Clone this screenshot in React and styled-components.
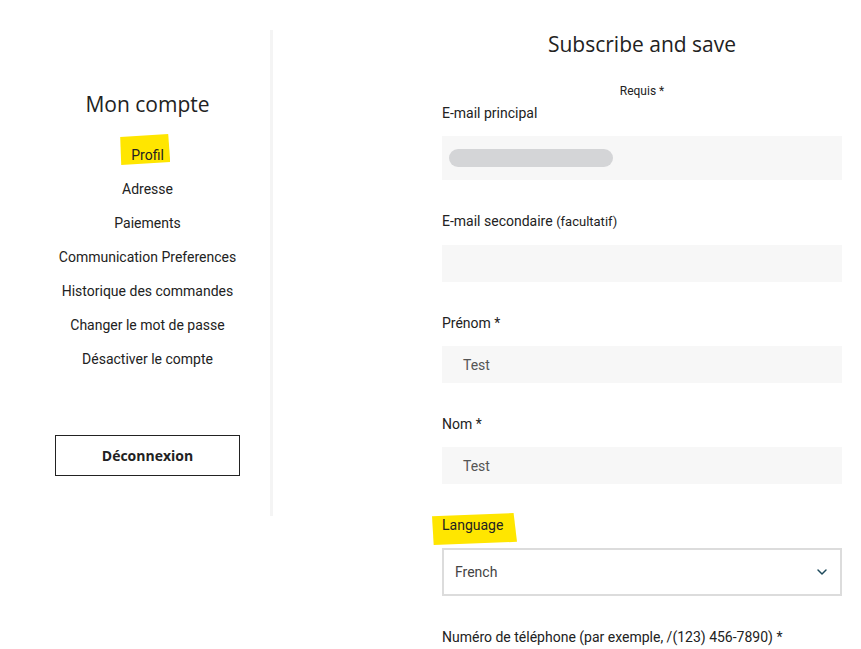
import React from "react";
import styled, { createGlobalStyle } from "styled-components";
import { ChevronDown } from "lucide-react";

const Global = createGlobalStyle`
  html, body { margin: 0; padding: 0; background: #fff; }
  body { font-family: Roboto, "Liberation Sans", sans-serif; color: #222; }
  * { box-sizing: border-box; }
`;

const Page = styled.div`
  display: flex;
  align-items: flex-start;
  width: 861px;
  height: 649px;
  overflow: hidden;
`;

const Sidebar = styled.aside`
  width: 273px;
  height: 486px;
  margin-top: 30px;
  padding: 59px 0 0 25px;
  border-right: 3px solid #f4f4f4;
  display: flex;
  flex-direction: column;
  align-items: center;
  flex-shrink: 0;
`;

const SideTitle = styled.h2`
  margin: 0;
  font-family: "Open Sans", "Noto Sans", sans-serif;
  font-weight: 400;
  font-size: 21px;
  line-height: 30px;
  color: #222;
`;

const Menu = styled.nav`
  display: flex;
  flex-direction: column;
  align-items: center;
  margin-top: 19px;
`;

const MenuItem = styled.a`
  position: relative;
  display: block;
  height: 34px;
  line-height: 34px;
  font-size: 14px;
  color: #222;
  text-decoration: none;
  z-index: 0;
`;

const Marker = styled.span`
  position: absolute;
  z-index: -1;
  background: #ffe600;
  left: ${(p) => p.$l}px;
  top: ${(p) => p.$t}px;
  width: ${(p) => p.$w}px;
  height: ${(p) => p.$h}px;
  clip-path: polygon(0% 10%, 96% 0%, 100% 90%, 2% 100%);
`;

const LogoutButton = styled.button`
  margin-top: 59px;
  width: 185px;
  height: 41px;
  border: 1.5px solid #222;
  background: #fff;
  font-family: "Open Sans", "Noto Sans", sans-serif;
  font-weight: 700;
  font-size: 14px;
  color: #222;
`;

const Main = styled.main`
  padding: 29px 0 0 169px;
  width: 569px;
`;

const Form = styled.div`
  width: 400px;
  display: flex;
  flex-direction: column;
`;

const Title = styled.h1`
  margin: 0;
  text-align: center;
  font-family: "Open Sans", "Noto Sans", sans-serif;
  font-weight: 400;
  font-size: 21px;
  line-height: 30px;
  color: #222;
`;

const Required = styled.div`
  margin: 21px 0 1px;
  text-align: center;
  font-size: 12px;
  line-height: 22px;
  color: #222;
`;

const Field = styled.div`
  display: flex;
  flex-direction: column;
  margin-bottom: 31px;
`;

const LabelWrap = styled.div`
  position: relative;
  z-index: 0;
  align-self: flex-start;
`;

const Label = styled.label`
  display: block;
  font-size: 14px;
  line-height: 20px;
  color: #222;
  margin-bottom: 13px;
`;

const Small = styled.span`
  font-size: 13px;
`;

const Input = styled.div`
  height: ${(p) => p.$h || 37}px;
  background: #f7f7f7;
  display: flex;
  align-items: center;
  padding-left: 21px;
  font-size: 14px;
  color: #555;
`;

const Blur = styled.div`
  width: 164px;
  height: 18px;
  border-radius: 9px;
  background: #d4d5d7;
  margin-left: -14px;
`;

const Select = styled.div`
  height: 48px;
  border: 2px solid #dcdcdc;
  display: flex;
  align-items: center;
  justify-content: space-between;
  padding: 0 10px 0 11px;
  font-size: 14px;
  color: #444;
`;

const menu = [
  "Profil",
  "Adresse",
  "Paiements",
  "Communication Preferences",
  "Historique des commandes",
  "Changer le mot de passe",
  "Désactiver le compte",
];

export default function App() {
  return (
    <>
      <Global />
      <Page>
        <Sidebar>
          <SideTitle>Mon compte</SideTitle>
          <Menu>
            {menu.map((m, i) => (
              <MenuItem key={m} href="#">
                {i === 0 && <Marker $l={-11} $t={-4} $w={50} $h={31} />}
                {m}
              </MenuItem>
            ))}
          </Menu>
          <LogoutButton>Déconnexion</LogoutButton>
        </Sidebar>
        <Main>
          <Form>
            <Title>Subscribe and save</Title>
            <Required>Requis *</Required>
            <Field>
              <Label>E-mail principal</Label>
              <Input $h={44}>
                <Blur />
              </Input>
            </Field>
            <Field>
              <Label>
                E-mail secondaire <Small>(facultatif)</Small>
              </Label>
              <Input />
            </Field>
            <Field>
              <Label>Prénom *</Label>
              <Input>Test</Input>
            </Field>
            <Field>
              <Label>Nom *</Label>
              <Input>Test</Input>
            </Field>
            <Field>
              <LabelWrap>
                <Marker $l={-10} $t={-2} $w={85} $h={32} />
                <Label>Language</Label>
              </LabelWrap>
              <Select>
                French
                <ChevronDown size={16} color="#1e4a5c" strokeWidth={2.2} />
              </Select>
            </Field>
            <Field>
              <Label>Numéro de téléphone (par exemple, /(123) 456-7890) *</Label>
            </Field>
          </Form>
        </Main>
      </Page>
    </>
  );
}
